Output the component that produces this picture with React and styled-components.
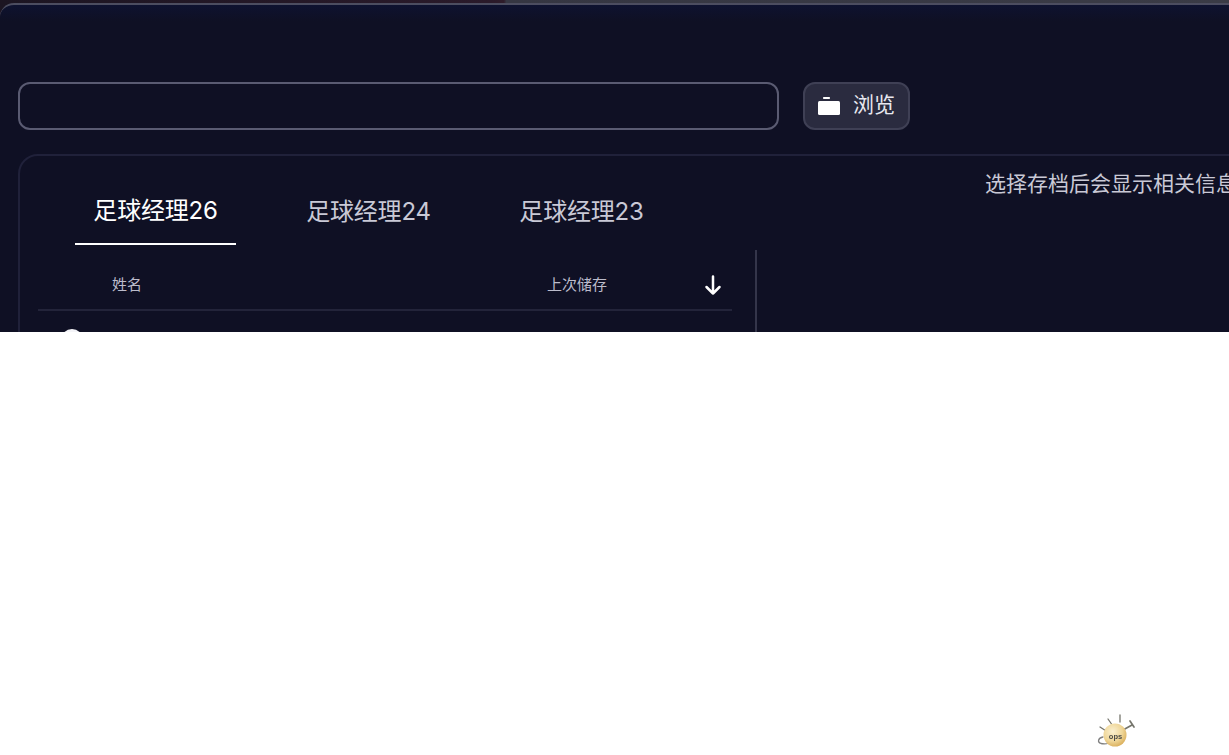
import React from "react";
import styled, { createGlobalStyle } from "styled-components";

const Global = createGlobalStyle`
  html, body { margin: 0; padding: 0; background: #fff; }
  body { font-family: Inter, "Noto Sans CJK SC", sans-serif; width: 1229px; height: 755px; overflow: hidden; position: relative; }
`;

const Viewport = styled.div`
  height: 332px;
  overflow: hidden;
  background: linear-gradient(90deg, #1c1522 0, #2a1a2a 40%, #2e1c2a 41%, #353642 41.2%, #3a3b46 100%);
`;

const Dialog = styled.section`
  box-sizing: border-box;
  margin-top: 3px;
  width: 1300px;
  height: 400px;
  background: linear-gradient(180deg, #0e1230 0, #0f1024 16px);
  border-top: 2px solid #4c4d60;
  border-top-left-radius: 14px;
  padding: 77px 0 0 18px;
`;

const PathRow = styled.div`
  display: flex;
  gap: 24px;
`;

const PathInput = styled.div`
  box-sizing: border-box;
  width: 761px;
  height: 48px;
  border: 2px solid #5a5b72;
  border-radius: 12px;
`;

const Browse = styled.button`
  box-sizing: border-box;
  width: 107px;
  height: 48px;
  display: flex;
  align-items: center;
  gap: 13px;
  padding: 0 0 6px 13px;
  background: #2a2b3f;
  border: 2px solid #3f4055;
  border-radius: 12px;
  color: #e8e8f0;
  font: 21px "Noto Sans CJK SC", sans-serif;
  line-height: 24px;
`;

const BrowseIcon = styled.svg`
  margin-top: 2px;
`;

const Card = styled.div`
  box-sizing: border-box;
  margin-top: 24px;
  height: 300px;
  border: 2px solid #20213a;
  border-radius: 20px 0 0 0;
  display: flex;
`;

const LeftPane = styled.div`
  width: 735px;
  flex: none;
  box-sizing: border-box;
`;

const Tabs = styled.div`
  display: flex;
  gap: 52px;
  height: 90px;
  padding-left: 55px;
  box-sizing: border-box;
`;

const Tab = styled.div`
  box-sizing: border-box;
  width: 161px;
  height: 89px;
  padding-top: ${(p) => (p.$active ? 40 : 41)}px;
  text-align: center;
  font-size: 24px;
  line-height: 30px;
  letter-spacing: -0.2px;
  color: ${(p) => (p.$active ? "#ffffff" : "#c9c9d6")};
  border-bottom: 2px solid ${(p) => (p.$active ? "#ffffff" : "transparent")};
`;

const HeadRow = styled.div`
  box-sizing: border-box;
  margin: 0 0 0 18px;
  width: 694px;
  height: 65px;
  padding-top: 11px;
  border-bottom: 2px solid #23243a;
  display: flex;
  align-items: center;
  color: #bcbccb;
  font: 15px "Noto Sans CJK SC", sans-serif;
`;

const NameCol = styled.span`
  margin-left: 74px;
  width: 435px;
`;

const DateCol = styled.span`
  width: 155px;
`;

const SortIcon = styled.svg`
  margin-top: 3px;
`;

const Avatar = styled.div`
  width: 22px;
  height: 22px;
  border-radius: 50%;
  background: #f4f4f8;
  margin: 18px 0 0 41px;
`;

const Side = styled.div`
  flex: 1;
`;

const Rule = styled.div`
  width: 2px;
  height: 120px;
  margin-top: 94px;
  background: #34354a;
`;

const Hint = styled.div`
  margin: 12px 0 0 228px;
  font: 21px/28px "Noto Sans CJK SC", sans-serif;
  color: #c9c9d6;
  white-space: nowrap;
`;

const Mascot = styled.svg`
  position: absolute;
  left: 1095px;
  top: 712px;
  filter: blur(0.4px);
`;

const FolderIcon = () => (
  <BrowseIcon width="22" height="22" viewBox="0 0 22 22" fill="#fff">
    <rect x="0" y="8" width="22" height="14" rx="1.5" />
    <rect x="5" y="4" width="7" height="2" rx=".8" />
  </BrowseIcon>
);

const ArrowDown = () => (
  <SortIcon width="22" height="22" viewBox="0 0 22 22" fill="none" stroke="#fff" strokeWidth="2.5" strokeLinecap="round" strokeLinejoin="round">
    <path d="M11 2.5v17M4.5 13 11 19.5 17.5 13" />
  </SortIcon>
);

export default function App() {
  return (
    <>
      <Global />
      <Viewport>
        <Dialog>
          <PathRow>
            <PathInput />
            <Browse>
              <FolderIcon />
              浏览
            </Browse>
          </PathRow>
          <Card>
            <LeftPane>
              <Tabs>
                <Tab $active>足球经理26</Tab>
                <Tab>足球经理24</Tab>
                <Tab>足球经理23</Tab>
              </Tabs>
              <HeadRow>
                <NameCol>姓名</NameCol>
                <DateCol>上次储存</DateCol>
                <ArrowDown />
              </HeadRow>
              <Avatar />
            </LeftPane>
            <Rule />
            <Side>
              <Hint>选择存档后会显示相关信息</Hint>
            </Side>
          </Card>
        </Dialog>
      </Viewport>
      <Mascot width="44" height="38" viewBox="0 0 44 38">
        <defs>
          <radialGradient id="ball" cx="40%" cy="35%" r="70%">
            <stop offset="0" stopColor="#faf0d0" />
            <stop offset="0.6" stopColor="#efd698" />
            <stop offset="1" stopColor="#d9ad58" />
          </radialGradient>
        </defs>
        <g stroke="#75756c" strokeWidth="1.3" fill="none" strokeLinecap="round">
          <path d="M5 15l5 3.3M13 7l3.5 5M25 3v7" />
          <path d="M28 18l9-5M35 9l4 6" strokeWidth="1.7" />
          <path d="M8 25c-5 1-6 5-2 6.5 3 .8 6 .3 8-.5" stroke="#808080" />
        </g>
        <circle cx="20" cy="23" r="11.5" fill="url(#ball)" />
        <text x="20.5" y="26.5" fontSize="7.5" textAnchor="middle" fill="#4a4a45" fontFamily="Liberation Sans, sans-serif" fontWeight="700">ops</text>
      </Mascot>
    </>
  );
}
